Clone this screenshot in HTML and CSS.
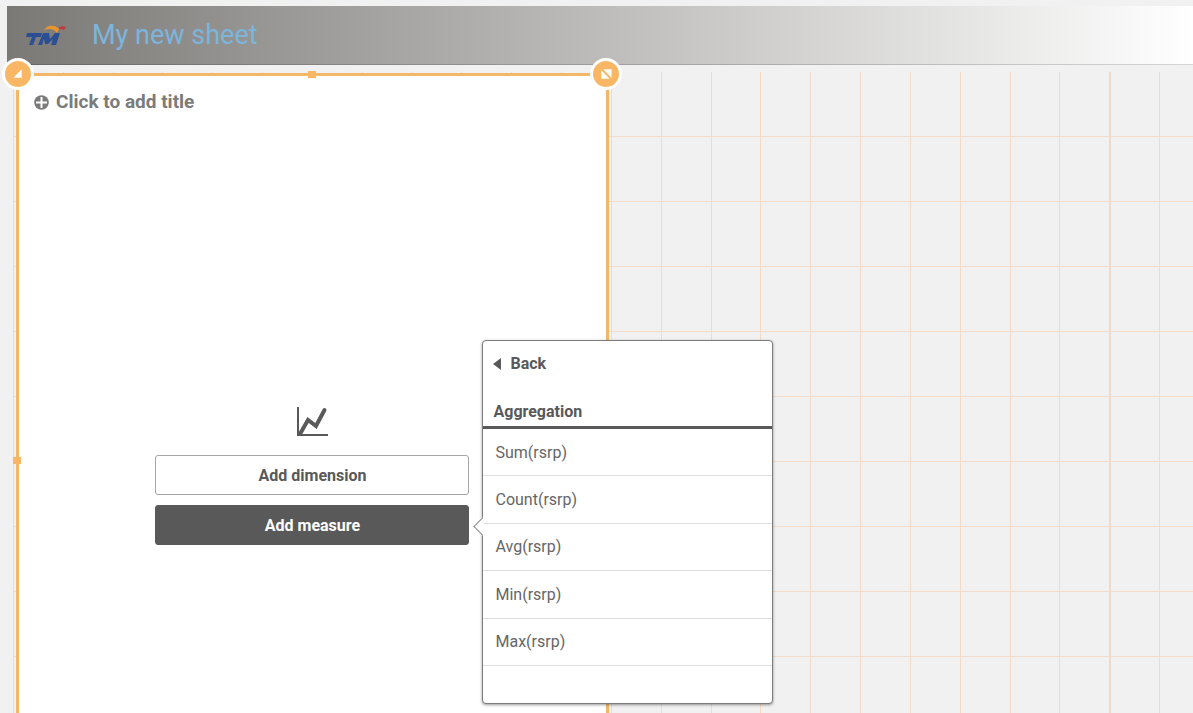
FILE: index.html
```html
<!DOCTYPE html>
<html lang="en">
<head>
<meta charset="utf-8">
<title>My new sheet</title>
<link rel="stylesheet" href="styles.css">
</head>
<body>
<header class="sheet-header">
  <svg class="logo" viewBox="0 0 42 24" role="img" aria-label="TM">
    <path fill="#2c4f93" d="M2 10h15l-1 4h-5l-3 8H4l3-8H1z"/>
    <path fill="#2c4f93" d="M18 10h6l1 6 5-6h5l-4 12h-5l2-6-5 5h-3l-1-5-2 6h-4z"/>
    <path fill="#e9962e" d="M19 7c3-5 11-6 15-1l-2 4c-3-4-7-5-13-3z"/>
    <path fill="#c23c3e" d="M34 4c3-1 5-1 7 0l-2 3c-2-1-4-1-5-1z"/>
  </svg>
  <h1 class="sheet-title">My new sheet</h1>
</header>
<main class="sheet">
  <div class="grid-lines">
    <span class="col"></span><span class="col"></span><span class="col"></span><span class="col"></span>
    <span class="col"></span><span class="col"></span><span class="col"></span><span class="col"></span>
    <span class="col"></span><span class="col"></span><span class="col"></span><span class="col"></span>
    <span class="col"></span><span class="col"></span><span class="col"></span><span class="col"></span>
    <span class="col"></span><span class="col"></span><span class="col"></span><span class="col"></span>
    <span class="col"></span><span class="col"></span><span class="col col-strong"></span><span class="col"></span>
  </div>
  <section class="panel">
    <button class="corner corner-left" aria-label="Move">
      <svg viewBox="0 0 28 28"><path fill="#fff" d="M18 9v9H9z"/></svg>
    </button>
    <button class="corner corner-right" aria-label="Expand">
      <svg viewBox="0 0 28 28"><path fill="#fff" d="M11 9h9v9zM9 10l9 9H9z"/></svg>
    </button>
    <span class="handle handle-top"></span>
    <span class="handle handle-left"></span>
    <button class="add-title">
      <svg class="plus" viewBox="0 0 15 15"><circle cx="7.500" cy="7.500" r="7.300" fill="#7b7b7b"/><path stroke="#fff" stroke-width="2" d="M7.500 2v11M2 7.500h11"/></svg>
      Click to add title
    </button>
    <div class="builder">
      <svg class="chart-icon" viewBox="0 0 32 32"><path fill="none" stroke="#595959" stroke-width="2" d="M2 2v28h30"/><path fill="none" stroke="#595959" stroke-width="4" stroke-linecap="round" d="M4 29l8-14 8 6 8.500-16"/></svg>
      <button class="choice">Add dimension</button>
      <div class="measure">
        <button class="choice choice-active">Add measure</button>
        <div class="popover">
          <button class="back">
            <svg class="back-arrow" viewBox="0 0 8 12"><path fill="#595959" d="M8 0v12L0 6z"/></svg>
            Back
          </button>
          <h2 class="group-title">Aggregation</h2>
          <ul class="options">
            <li class="option"><button class="option-button">Sum(rsrp)</button></li>
            <li class="option"><button class="option-button">Count(rsrp)</button></li>
            <li class="option"><button class="option-button">Avg(rsrp)</button></li>
            <li class="option"><button class="option-button">Min(rsrp)</button></li>
            <li class="option"><button class="option-button">Max(rsrp)</button></li>
          </ul>
        </div>
      </div>
    </div>
  </section>
</main>
</body>
</html>
```
FILE: styles.css
```css
* { box-sizing: border-box; }
body {
  margin: 0;
  padding: 6px 0 0 7px;
  height: 100vh;
  overflow: hidden;
  display: flex;
  flex-direction: column;
  background: #f1f1f1;
  color: #595959;
  font-family: Roboto, "Liberation Sans", sans-serif;
  font-size: 16px;
}
button {
  font: inherit;
  color: inherit;
  background: none;
  border: 0;
  padding: 0;
  cursor: pointer;
}
.sheet-header {
  display: flex;
  align-items: center;
  gap: 25px;
  height: 59px;
  flex: none;
  padding-left: 18px;
  border-bottom: 1px solid rgba(0, 0, 0, 0.16);
  background: linear-gradient(90deg, #7b7976, #fff);
}
.logo { width: 42px; height: 24px; }
.sheet-title { margin: 0; font-size: 27px; line-height: 34px; font-weight: 400; color: #7cb5dc; }
.sheet {
  flex: 1;
  min-height: 0;
  display: grid;
  grid-template-columns: repeat(24, minmax(0, 1fr));
  grid-template-rows: minmax(0, 1fr);
  margin: 6px -16px 0 6px;
}
.grid-lines {
  grid-row: 1;
  grid-column: 1 / -1;
  display: grid;
  grid-template-columns: subgrid;
  border-top: 1px solid transparent;
  background: linear-gradient(transparent 64px, #f5dcc8 64px) 0 0 / 100% 65px padding-box;
}
.col { border-left: 1px solid #f2dac6; }
.col-strong { border-left-width: 2px; }
.panel {
  grid-row: 1;
  grid-column: 1 / 13;
  position: relative;
  margin: 2px 2px 0 3px;
  border: 3px solid #f3b769;
  border-bottom: 0;
  background: #fff;
  display: flex;
  flex-direction: column;
  align-items: flex-start;
}
.corner {
  position: absolute;
  top: -18px;
  width: 32px;
  height: 32px;
  border: 3px solid #fff;
  border-radius: 50%;
  background: #f9b765;
}
.corner svg { display: block; width: 100%; height: 100%; }
.corner-left { left: -17px; }
.corner-right { right: -16px; }
.handle { position: absolute; width: 8px; height: 7px; background: #f9b765; }
.handle-top { top: -5px; left: 50%; margin-left: -4px; }
.handle-left { left: -6px; top: 381px; }
.add-title {
  display: flex;
  align-items: center;
  gap: 7px;
  margin: 14px 0 0 15px;
  font-size: 19px;
  line-height: 24px;
  font-weight: 700;
  color: #7b7b7b;
}
.plus { width: 15px; height: 15px; }
.builder {
  align-self: center;
  width: 314px;
  margin-top: 291px;
  display: flex;
  flex-direction: column;
  align-items: center;
  gap: 10px;
}
.chart-icon { width: 32px; height: 32px; margin-bottom: 8px; }
.choice {
  width: 100%;
  height: 40px;
  border: 1px solid #a6a6a6;
  border-radius: 3px;
  font-weight: 700;
  background: #fff;
}
.measure { position: relative; width: 100%; }
.choice-active { display: block; background: #595959; border-color: #595959; color: #fff; }
.popover {
  position: absolute;
  z-index: 2;
  top: -165px;
  left: calc(100% + 13px);
  width: 291px;
  padding-bottom: 37px;
  border: 1px solid #7c7c7c;
  border-radius: 4px;
  background: #fff;
  box-shadow: 0 1px 3px rgba(0, 0, 0, 0.4);
}
.popover::before {
  content: "";
  position: absolute;
  top: 179px;
  left: -7px;
  width: 12px;
  height: 12px;
  border: 1px solid #8c8c8c;
  border-width: 0 0 1px 1px;
  background: #fff;
  transform: rotate(45deg);
}
.back {
  display: flex;
  align-items: center;
  gap: 9px;
  margin: 11px 0 0 10px;
  line-height: 24px;
  font-weight: 700;
}
.back-arrow { width: 8px; height: 12px; }
.group-title {
  margin: 24px 0 0;
  padding: 0 10px 2px;
  border-bottom: 3px solid #595959;
  font-size: 16px;
  line-height: 24px;
  font-weight: 700;
}
.options {
  position: relative;
  list-style: none;
  margin: 0;
  padding: 0;
  display: grid;
  grid-auto-rows: 1fr;
  height: 237px;
}
.option { display: flex; border-bottom: 1px solid #e0e0e0; }
.option-button { flex: 1; padding: 0 12px; text-align: left; color: #666; }
```
